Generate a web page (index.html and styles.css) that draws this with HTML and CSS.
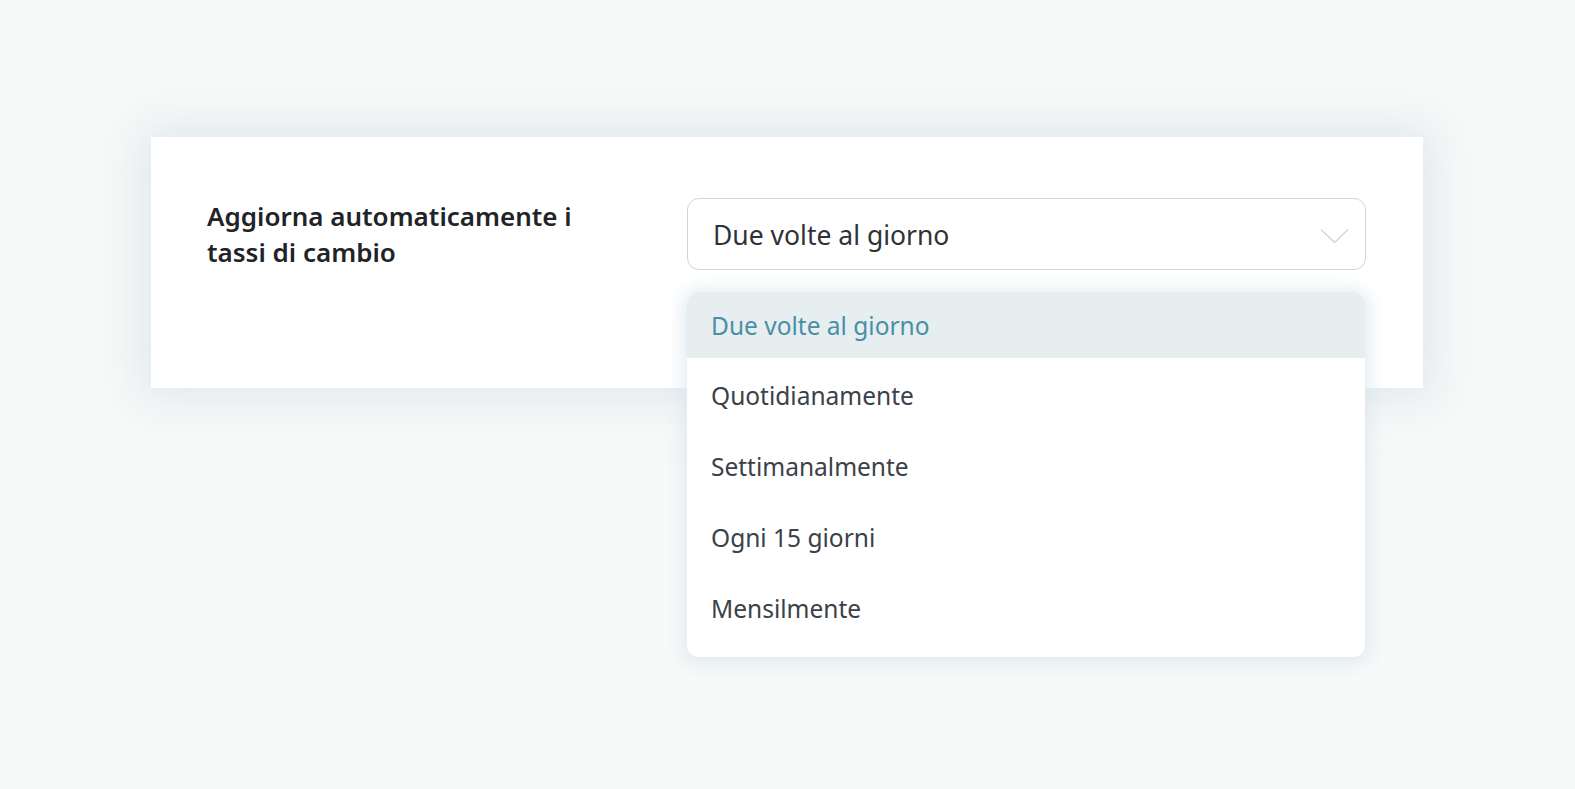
FILE: index.html
```html
<!DOCTYPE html>
<html lang="it">
<head>
<meta charset="utf-8">
<title>Tassi di cambio</title>
<link rel="stylesheet" href="styles.css">
</head>
<body>
<div class="page">
  <section class="card">
    <div class="label">Aggiorna automaticamente i tassi di cambio</div>
    <div class="field">
      <div class="select">
        <span class="value">Due volte al giorno</span>
        <svg class="chev" width="29" height="16" viewBox="0 0 29 16"><path d="M1 1.5 L14.5 14.5 L28 1.5" fill="none" stroke="#cdd6e2" stroke-width="1.4"/></svg>
      </div>
      <ul class="menu">
        <li class="item active">Due volte al giorno</li>
        <li class="item">Quotidianamente</li>
        <li class="item">Settimanalmente</li>
        <li class="item">Ogni 15 giorni</li>
        <li class="item">Mensilmente</li>
      </ul>
    </div>
  </section>
</div>
</body>
</html>
```

FILE: styles.css
```css
html, body {
  margin: 0;
  padding: 0;
  background: #f8f9f9;
  font-family: "Segoe UI", "Noto Sans", "Open Sans", sans-serif;
}
body {
  min-height: 789px;
}
.page {
  padding: 137px 0 0 151px;
}
.card {
  background: #fff;
  width: 1272px;
  height: 251px;
  box-shadow: 0 0 42px 10px rgba(202, 216, 224, 0.5);
  display: flex;
  padding: 0 0 0 56px;
  box-sizing: border-box;
  position: relative;
}
.label {
  width: 400px;
  padding-top: 61px;
  font-size: 26px;
  line-height: 36px;
  font-weight: 600;
  color: #1f2429;
  margin-right: 80px;
}
.field {
  width: 679px;
  padding-top: 61px;
  position: relative;
}
.select {
  height: 72px;
  box-sizing: border-box;
  border: 1.5px solid #d3d3d3;
  border-radius: 12px;
  display: flex;
  align-items: center;
  justify-content: space-between;
  padding: 2px 16px 0 25px;
  font-size: 26.5px;
  color: #2e3338;
}
.chev { margin-top: 1px; }
.menu {
  position: absolute;
  left: 0;
  width: 678px;
  top: 155px;
  list-style: none;
  margin: 0;
  padding: 0 0 16px;
  background: #fff;
  border-radius: 12px;
  box-shadow: 0 2px 18px 4px rgba(214, 228, 236, 0.75);
  display: flex;
  flex-direction: column;
  gap: 4.5px;
  overflow: hidden;
  z-index: 2;
}
.item {
  height: 66.3px;
  display: flex;
  align-items: center;
  padding: 0 24px;
  font-size: 24.5px;
  color: #3b4148;
}
.item.active {
  background: #e7eef0;
  color: #4a8fa6;
}
```
